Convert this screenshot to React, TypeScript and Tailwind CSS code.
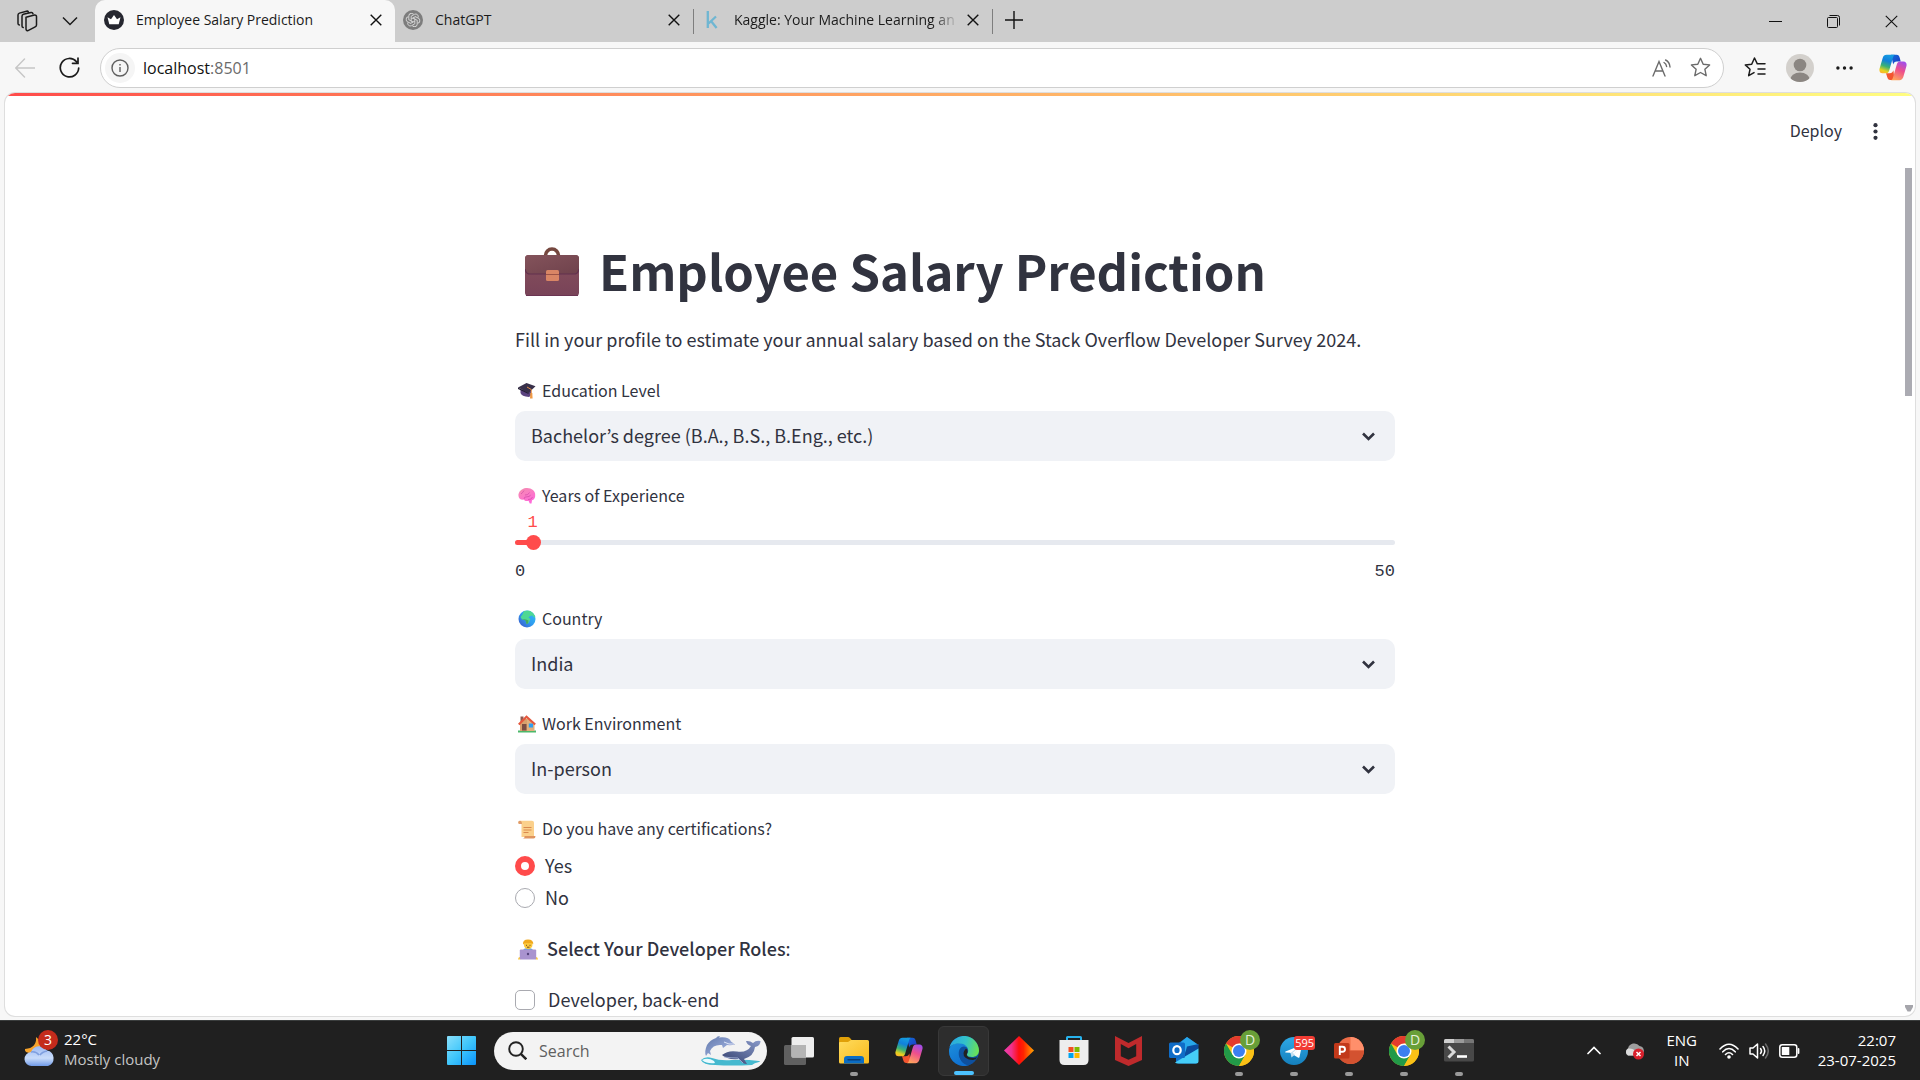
import { useId, useState } from "react";
import type { ReactNode } from "react";

const UI = "font-['Open_Sans','Noto_Sans',sans-serif]";
const SOURCE = "font-['Noto_Sans_CJK_KR',sans-serif]";

/* ---------- Browser icons ---------- */

function WorkspacesIcon() {
  return (
    <svg width="22" height="22" viewBox="0 0 22 22" fill="none" stroke="#1b1b1b" strokeWidth="1.5" strokeLinejoin="round" strokeLinecap="round">
      <path d="M10 7.2 18.5 5a1.6 1.6 0 0 1 2 1.600v8.300a2 2 0 0 1-1.300 1.900l-6.700 3.600A1.600 1.600 0 0 1 10 19Z" />
      <path d="M7.200 17.600A1.600 1.600 0 0 1 6 16V6.200a2 2 0 0 1 1.400-1.900L15 2.600a1.700 1.700 0 0 1 2 1.200" />
      <path d="M3.400 15A1.600 1.600 0 0 1 2 13.400V5a2 2 0 0 1 1.400-1.900L10.500 1.200a1.600 1.600 0 0 1 1.900.9" />
    </svg>
  );
}

function CloseGlyph({ size = 12, weight = 1.4 }: { size?: number; weight?: number }) {
  return (
    <svg width={size} height={size} viewBox="0 0 12 12" fill="none" stroke="#111" strokeWidth={weight}>
      <path d="M.7.7l10.600 10.600M11.300.7.7 11.300" />
    </svg>
  );
}

function CrownIcon() {
  return (
    <svg width="20" height="20" viewBox="0 0 20 20">
      <circle cx="10" cy="10" r="10" fill="#262730" />
      <path d="M3.500 7.300 7 9.200 10 5l3 4.200 3.500-1.900-1.800 6.900H5.300Z" fill="#fff" />
    </svg>
  );
}

function OpenAiIcon() {
  return (
    <svg width="20" height="20" viewBox="0 0 20 20" fill="none">
      <circle cx="10" cy="10" r="10" fill="#7d7d7d" />
      <g stroke="#d8d8d8" strokeWidth=".9" strokeLinejoin="round">
        {[0, 60, 120, 180, 240, 300].map((a) => (
          <path key={a} d="M8.200 10.900V6.200l3.300-1.900a2.600 2.600 0 0 1 3.600 3.300" transform={`rotate(${a} 10 10)`} />
        ))}
      </g>
    </svg>
  );
}

function KaggleIcon() {
  return (
    <svg width="12" height="20" viewBox="0 0 12 20" fill="none" stroke="#6fb6d2" strokeWidth="2.300">
      <path d="M1.800 1v17M10 6.500l-7.500 7M5 11l5.600 7" />
    </svg>
  );
}

function ReadAloudIcon() {
  return (
    <svg width="20" height="20" viewBox="0 0 20 20" fill="none" stroke="#6b6b6b" strokeWidth="1.400" strokeLinecap="round">
      <path d="M1 18 7 3.500 13 18M3.200 13h7.600" />
      <path d="M12 4.500q2.300 1.200 2.600 4M13.600 2q4 2 4.400 7" />
    </svg>
  );
}

function StarIcon() {
  return (
    <svg width="21" height="21" viewBox="0 0 21 21" fill="none" stroke="#6b6b6b" strokeWidth="1.400" strokeLinejoin="round">
      <path d="m10.500 1.300 2.700 5.900 6.400.7-4.700 4.400 1.300 6.400-5.700-3.200-5.700 3.200 1.300-6.400L1.400 7.900l6.400-.7Z" />
    </svg>
  );
}

function FavoritesIcon() {
  return (
    <svg width="22" height="21" viewBox="0 0 22 21" fill="none" stroke="#1b1b1b" strokeWidth="1.500" strokeLinejoin="round" strokeLinecap="round">
      <path d="M13.300 6.800 10.500 1 7.700 7.200 1.300 7.900 6 12.300l-1.300 6.400L10 15.600M13.300 6.800H21" />
      <path d="M14 12H21M14 17H21" />
    </svg>
  );
}

function ProfileIcon() {
  return (
    <svg width="28" height="28" viewBox="0 0 28 28">
      <defs>
        <clipPath id="avatar-clip">
          <circle cx="14" cy="14" r="14" />
        </clipPath>
      </defs>
      <g clipPath="url(#avatar-clip)">
        <rect width="28" height="28" fill="#d3d0cc" />
        <circle cx="14" cy="11" r="6.300" fill="#8b8682" />
        <ellipse cx="14" cy="26.500" rx="10" ry="8" fill="#8b8682" />
      </g>
    </svg>
  );
}

function CopilotIcon() {
  const id = useId();
  return (
    <svg width="28" height="27" viewBox="0 0 28 27">
      <defs>
        <linearGradient id={id + "a"} x1=".5" y1="0" x2=".2" y2="1">
          <stop offset="0" stopColor="#159be0" />
          <stop offset=".3" stopColor="#1180dc" />
          <stop offset=".6" stopColor="#3bb273" />
          <stop offset=".85" stopColor="#e8d21d" />
          <stop offset="1" stopColor="#ffb02e" />
        </linearGradient>
        <linearGradient id={id + "b"} x1=".7" y1="0" x2=".3" y2="1">
          <stop offset="0" stopColor="#a34de8" />
          <stop offset=".45" stopColor="#ee4f8c" />
          <stop offset="1" stopColor="#ffa45c" />
        </linearGradient>
        <linearGradient id={id + "c"} x1="0" y1="0" x2="1" y2="1">
          <stop offset="0" stopColor="#0f6fd8" />
          <stop offset="1" stopColor="#2136c4" />
        </linearGradient>
      </defs>
      <path d="M12 .8h5.500c2 0 2.700 1.200 3.200 3l1 3.600h-3.900c-2 0-3 1-3.600 3Z" fill={`url(#${id}c)`} />
      <path d="M15.500 26h-4.300c-1.700 0-2.500-1.200-3-3l-1.200-3.700h3.700c2 0 3-1 3.700-3Z" fill="#f3552f" />
      <path d="M7.500.8H16c-1 .3-1.600 1.200-2 2.600l-3.800 13c-.5 1.900-1.600 2.900-3.500 2.900H3.500C1 19.300-.1 17 .6 14.500L3.700 4C4.300 2 5.600.8 7.500.8Z" fill={`url(#${id}a)`} />
      <path d="M20.500 26.200H12c1-.3 1.600-1.200 2-2.600l3.800-13.200c.5-1.900 1.600-2.900 3.500-2.900h3.200c2.500 0 3.600 2.300 2.900 4.700L24.300 23c-.6 2-1.900 3.200-3.800 3.200Z" fill={`url(#${id}b)`} />
    </svg>
  );
}

/* ---------- Form pictograms ---------- */

function BriefcaseIcon() {
  return (
    <svg width="54" height="50" viewBox="0 0 54 50">
      <defs>
        <linearGradient id="case-body" x1="0" y1="0" x2="0" y2="1">
          <stop offset="0" stopColor="#87505c" />
          <stop offset="1" stopColor="#784358" />
        </linearGradient>
        <linearGradient id="case-flap" x1="0" y1="0" x2="1" y2="1">
          <stop offset="0" stopColor="#84535b" />
          <stop offset="1" stopColor="#6f424c" />
        </linearGradient>
      </defs>
      <path d="M20.500 10V8.500a6.500 6.500 0 0 1 13 0V10" fill="none" stroke="#75473f" strokeWidth="3.600" />
      <rect y="8" width="54" height="41" rx="3.500" fill="url(#case-body)" />
      <path d="M0 11.500A3.500 3.500 0 0 1 3.500 8h47a3.500 3.500 0 0 1 3.500 3.500V22q-1 5-5 5H5q-4 0-5-5Z" fill="url(#case-flap)" />
      <path d="M0 22q1 5 5 5h44q4 0 5-5" fill="none" stroke="#63304f" strokeWidth="1.200" />
      <path d="M1 48.500h52" stroke="#6b3452" strokeWidth="1" />
      <rect x="21" y="23" width="13" height="11" rx="1.500" fill="#d98565" />
      <path d="M21 27.500h13" stroke="#9c5346" strokeWidth="1" />
    </svg>
  );
}

function GraduationIcon() {
  return (
    <svg width="18" height="18" viewBox="0 0 18 18">
      <path d="M2.500 7.500v3.500q1 3.500 8.500 4l2-1.500V8Z" fill="#5b4380" />
      <path d="M0 5.500 8.500 1 17.500 4.300 10.500 11Z" fill="#38304a" />
      <path d="M0 5.500 10.500 11v1L0 7Z" fill="#231d33" />
      <path d="M9 5 13.300 7.500V12" fill="none" stroke="#e8934a" strokeWidth="1" />
      <path d="M12.300 11h2l.3 5.500h-2.600Z" fill="#f09a45" />
    </svg>
  );
}

function BrainIcon() {
  return (
    <svg width="18" height="18" viewBox="0 0 18 18">
      <defs>
        <linearGradient id="brain-fill" x1="0" y1="0" x2=".6" y2="1">
          <stop offset="0" stopColor="#f58fae" />
          <stop offset="1" stopColor="#ff69d8" />
        </linearGradient>
      </defs>
      <path d="M.5 9C0 5 3.500 1.500 8 1c5-.5 9.500 2.500 9.200 7 .2 3-1.200 4.800-3.200 5.300l-.5 3.200h-1.700l-1.300-2.700C8.500 14.500 6.500 14 6 12.500 3 13.200.8 11.800.5 9Z" fill="url(#brain-fill)" />
      <path d="M3 7q2-1.500 3-3.500M7 8q3 .5 4.500-2.500M6 12q0-2.500 3-2.200t3.500-2M10 12.500q3.500.5 4.500-2.500" fill="none" stroke="#d651a8" strokeWidth=".8" />
    </svg>
  );
}

function GlobeIcon() {
  return (
    <svg width="18" height="18" viewBox="0 0 18 18">
      <defs>
        <linearGradient id="globe-sea" x1="1" y1="0" x2="0" y2="1">
          <stop offset="0" stopColor="#2fc4f5" />
          <stop offset=".5" stopColor="#2f9cf0" />
          <stop offset="1" stopColor="#3b4cc4" />
        </linearGradient>
        <clipPath id="globe-clip">
          <circle cx="9" cy="9" r="8.500" />
        </clipPath>
      </defs>
      <g clipPath="url(#globe-clip)">
        <rect width="18" height="18" fill="url(#globe-sea)" />
        <path d="M6 1 11 0l5 2 2 4.500-2 1-1.500-2-2.500.5-1.500 1.500L12.500 9 10.500 13 8.500 14l-1-4-3.500-.5L2.500 7l2-2.500Z" fill="#4ed894" />
        <path d="M3.500 9 8 9.500l2.500 1-.5 3-1.500.5-1-3.500Z" fill="#45a95f" />
      </g>
    </svg>
  );
}

function HouseIcon() {
  return (
    <svg width="18" height="18" viewBox="0 0 18 18">
      <rect y="15.500" width="18" height="2" fill="#4cb86a" />
      <rect x="2.500" y="1.500" width="3" height="6" fill="#8f5a50" />
      <path d="M2 8 7 3l9 5v8H2Z" fill="#d8a06c" />
      <path d="M9 3 16.500 9v7H9Z" fill="#e2b07c" />
      <rect x="4" y="9" width="4.500" height="6.500" fill="#7b4d43" />
      <rect x="10.800" y="8.500" width="4.200" height="4" fill="#2f9ff0" />
      <path d="M.8 9.500 8.500 1.800l8.700 7.700" fill="none" stroke="#e4573d" strokeWidth="2.200" />
    </svg>
  );
}

function ScrollIcon() {
  return (
    <svg width="18" height="19" viewBox="0 0 18 19">
      <path d="M2 .8h12a2 2 0 0 1 2 2V17H3.500V4H2A1.600 1.600 0 0 1 2 .8Z" fill="#fbd08b" />
      <path d="M1.800.8a1.600 1.600 0 0 0 0 3.200H4Q3.800.8 1.800.8Z" fill="#e09a68" />
      <path d="M5.500 7.500h8M5.500 10h8M5.500 12.500h5" stroke="#d98a4f" strokeWidth="1" />
      <path d="M6.500 16h11q0 2.500-2 2.500H4.500Q7 18 6.500 16Z" fill="#df9560" />
    </svg>
  );
}

function TechnologistIcon() {
  return (
    <svg width="20" height="21" viewBox="0 0 20 21">
      <path d="M4.500 12q1-3 5.500-3t5.500 3v4h-11Z" fill="#58a6d8" />
      <circle cx="10.200" cy="5.800" r="4.300" fill="#fcc83c" />
      <path d="M5 5.500Q4.500.5 10 .5t5.300 4.800Q13 3.500 10.500 4.200 7.500 3.500 5 5.500Z" fill="#f0a91e" />
      <path d="M8.500 5.800v1M12 5.800v1M9 8.200h2.500" stroke="#5e3d20" strokeWidth=".9" />
      <path d="M0 20.500Q0 17.500 2.500 18v2.500ZM20 20.500q0-3-2.500-2.500v2.500Z" fill="#fcc83c" />
      <rect x="1.800" y="10.500" width="16.400" height="10" rx="1" fill="#a993cf" />
      <circle cx="10" cy="15" r="1.200" fill="#54437b" />
    </svg>
  );
}

/* ---------- Taskbar icons ---------- */

function WeatherIcon() {
  return (
    <svg width="36" height="38" viewBox="0 0 36 38">
      <defs>
        <linearGradient id="cloud-fill" x1="0" y1="0" x2="0" y2="1">
          <stop offset="0" stopColor="#9db9f2" />
          <stop offset=".6" stopColor="#c9dcfa" />
          <stop offset="1" stopColor="#6f9ae8" />
        </linearGradient>
      </defs>
      <path d="M12 7Q19 12 15 19T2 22Q.5 20.500 1 19 13 18 12 7Z" fill="#f7a32b" />
      <path d="M8 36a7 7 0 0 1-1-14A9 9 0 0 1 23 20.500 8 8 0 0 1 24 36Z" fill="url(#cloud-fill)" />
      <path d="M7 22q5-1 8 3M23 21q-5 1-7 4" fill="none" stroke="#7f9fdf" strokeWidth="1.500" />
    </svg>
  );
}

function StartIcon() {
  return (
    <svg width="29" height="29" viewBox="0 0 29 29">
      <defs>
        <linearGradient id="start-fill" gradientUnits="userSpaceOnUse" x1="0" y1="0" x2="29" y2="29">
          <stop offset="0" stopColor="#8ae0fb" />
          <stop offset=".5" stopColor="#3fc6fb" />
          <stop offset="1" stopColor="#0a93fb" />
        </linearGradient>
      </defs>
      <path d="M1 0h13v14H0V1Q0 0 1 0ZM15 0h13q1 0 1 1v13H15ZM0 15h14v14H1q-1 0-1-1ZM15 15h14v13q0 1-1 1H15Z" fill="url(#start-fill)" />
    </svg>
  );
}

function DolphinArt() {
  return (
    <svg width="60" height="30" viewBox="0 0 60 30">
      <defs>
        <linearGradient id="dolphin-a" x1="0" y1="0" x2="1" y2="1">
          <stop offset="0" stopColor="#5f76a8" />
          <stop offset=".6" stopColor="#8fa2d2" />
          <stop offset="1" stopColor="#46568f" />
        </linearGradient>
        <linearGradient id="dolphin-b" x1="1" y1="0" x2="0" y2="1">
          <stop offset="0" stopColor="#8798c8" />
          <stop offset="1" stopColor="#34406d" />
        </linearGradient>
      </defs>
      <path d="M0 24q4-4 11-2 8 3 20 2t27 1q2 .5 0 1-5 1-7 3-20 1-37 0Q2 29 0 24Z" fill="#45b9cf" />
      <path d="M1 24q6-3 12 1l1 2q-8 1-13-3Z" fill="#e9fbff" />
      <path d="M5 20Q3 16 6 9q3-5 9-7 1-2 4-2l-1 1.500q10-1 12 4l4 3q-4 1-8 .5l-4 3-1-3Q12 8 9 15l1 4-3-2Z" fill="url(#dolphin-a)" />
      <path d="M33 8q-5 1-10-2" stroke="#dfe6f8" strokeWidth="1" fill="none" />
      <path d="M21 19q6-5 15-3.500 10 1.500 14-5.500-4-1-5-5 4-.5 7 2 3-3 7.500-2 0 5-5.500 6-1 9-11 12l3 5q-5 0-8-5-12 1-17-4Z" fill="url(#dolphin-b)" />
      <path d="M23 21q7 1 14 1l5 5" stroke="#a9b8dd" strokeWidth=".8" fill="none" />
    </svg>
  );
}

function TaskViewIcon() {
  return (
    <svg width="30" height="28" viewBox="0 0 30 28">
      <rect y="8" width="22" height="20" rx="1.500" fill="#606060" />
      <rect x="7.500" width="22.500" height="20.500" rx="1.500" fill="#eee" />
      <path d="M7.500 8H22v12.500H9q-1.500 0-1.500-1.500Z" fill="#b4b4b4" />
    </svg>
  );
}

function ExplorerIcon() {
  return (
    <svg width="30" height="27" viewBox="0 0 30 27">
      <defs>
        <linearGradient id="folder-fill" x1="0" y1="0" x2="1" y2="1">
          <stop offset="0" stopColor="#ffdc5e" />
          <stop offset="1" stopColor="#f9b91a" />
        </linearGradient>
      </defs>
      <path d="M0 8V1.500Q0 0 1.500 0H9q1 0 2 1l2 2.500V8Z" fill="#e0a008" />
      <path d="M0 6q0-1 1-1h8l3-2h16.500Q30 3 30 4.500V25q0 1.500-1.500 1.500h-27Q0 26.500 0 25Z" fill="url(#folder-fill)" />
      <path d="M5 26.500V22q0-3 3-3h14q3 0 3 3v4.500Z" fill="#0b6dc4" />
      <path d="M9 22.800h12" stroke="#0a3f78" strokeWidth="1.400" strokeLinecap="round" />
    </svg>
  );
}

function EdgeIcon() {
  return (
    <svg width="30" height="30" viewBox="0 0 30 30">
      <defs>
        <linearGradient id="edge-top" x1="0" y1=".4" x2="1" y2=".6">
          <stop offset="0" stopColor="#2aa7e0" />
          <stop offset=".5" stopColor="#33c3c9" />
          <stop offset="1" stopColor="#6be252" />
        </linearGradient>
        <linearGradient id="edge-left" x1="0" y1="0" x2=".6" y2="1">
          <stop offset="0" stopColor="#1c8fdc" />
          <stop offset="1" stopColor="#0f6fd0" />
        </linearGradient>
      </defs>
      <circle cx="15" cy="15" r="15" fill="#0e509e" />
      <path d="M0 15C0 10 5 7 11 7q7 0 8 6-1-2.500-4-2.500C11 10.500 9 15 10 20c1 4 5 8 11 8.800A15 15 0 0 1 0 15Z" fill="url(#edge-left)" />
      <path d="M.3 12A15 15 0 0 1 30 14.500C30 19 26.500 21 23 21q-5 0-5-2.500c0-1 1.200-1.600 1.200-4C19 11 16 7.500 10.500 7.500 5.500 7.500 1.500 9.500.3 12Z" fill="url(#edge-top)" />
      <path d="M17 12.500q2.500 2 1 5.500-1 2 2 3.200 4 1.400 8 .1-.8 1.500-1.500 2.400-6 1-10-2-4.500-4 .5-9.200Z" fill="#212121" />
      <path d="M13 15q-1 5 3.500 8 4.500 2.600 10.500 0-3 5-8 6.500Q11 27 10.500 20q0-4 2.500-5Z" fill="#0e509e" />
    </svg>
  );
}

function DiamondIcon() {
  return (
    <svg width="30" height="29" viewBox="0 0 30 29">
      <defs>
        <linearGradient id="diamond-fill">
          <stop offset="0" stopColor="#ef3fb0" />
          <stop offset=".25" stopColor="#f0308a" />
          <stop offset=".5" stopColor="#ff0d0d" />
          <stop offset=".65" stopColor="#ff2400" />
          <stop offset="1" stopColor="#ffa500" />
        </linearGradient>
      </defs>
      <path d="M15 0 30 14.500 15 29 0 14.500Z" fill="url(#diamond-fill)" />
    </svg>
  );
}

function StoreIcon() {
  return (
    <svg width="30" height="29" viewBox="0 0 30 29">
      <path d="M8 5V1.500Q8 1 8.500 1h13q.5 0 .5.500V5" fill="none" stroke="#27b2ec" strokeWidth="2" />
      <path d="M.5 4h29v20q0 5-5 5h-19q-5 0-5-5Z" fill="#ededed" />
      <path d="M9.500 11h5v5h-5Z" fill="#f25022" />
      <path d="M15.500 11h5v5h-5Z" fill="#7fba00" />
      <path d="M9.500 17h5v5h-5Z" fill="#00a4ef" />
      <path d="M15.500 17h5v5h-5Z" fill="#ffb900" />
    </svg>
  );
}

function McAfeeIcon() {
  return (
    <svg width="27" height="30" viewBox="0 0 27 30">
      <path d="M0 0 13.500 7 27 0v24l-13.500 6L0 24Zm5.800 8v12.200l7.700 3.600 7.700-3.600V8l-7.700 4.300Z" fill="#bf2a2c" />
    </svg>
  );
}

function OutlookIcon() {
  return (
    <svg width="30" height="27" viewBox="0 0 30 27">
      <path d="M7 8 18 0l11 8v16q0 2.500-2.500 2.500H10Q7 26.500 7 24Z" fill="#1173cf" />
      <path d="M12 5 18 0l11.500 8-12 9Z" fill="#28a8ea" />
      <path d="M18 9.500 29.500 7v5L15 20Z" fill="#0b4c9e" />
      <path d="M6 25.500 29.500 11.500V24q0 2.500-2.500 2.500H9Q7 26.500 6 25.500Z" fill="#45cdf7" />
      <rect y="5.500" width="16" height="15.500" rx="1.500" fill="#0f6cc7" />
      <ellipse cx="8" cy="13.200" rx="3.700" ry="4" fill="none" stroke="#fff" strokeWidth="2.200" />
    </svg>
  );
}

function ChromeIcon() {
  return (
    <svg width="30" height="30" viewBox="0 0 30 30">
      <circle cx="15" cy="15" r="15" fill="#fbc116" />
      <path d="M15 15 2 7.500A15 15 0 0 1 28 7.500H15Z" fill="#e33b2e" />
      <path d="M2 7.500 8.500 18.800 15 15l6.500 3.800L15 30A15 15 0 0 1 2 7.500Z" fill="#229a48" />
      <path d="M21.500 18.800 15 30A15 15 0 0 0 28 7.500H15L21.500 11.200Z" fill="#fbc116" />
      <circle cx="15" cy="15" r="7.500" fill="#fff" />
      <circle cx="15" cy="15" r="6" fill="#3b7ff0" />
    </svg>
  );
}

function TelegramIcon() {
  return (
    <svg width="28" height="28" viewBox="0 0 28 28">
      <defs>
        <linearGradient id="tg-fill" x1="0" y1="0" x2="0" y2="1">
          <stop offset="0" stopColor="#2ea8e6" />
          <stop offset="1" stopColor="#1580bd" />
        </linearGradient>
      </defs>
      <circle cx="14" cy="14" r="14" fill="url(#tg-fill)" />
      <path d="M5.500 14.500 21 8.300q1-.3.800 1L19.500 20q-.4 1.300-1.600.6L10 15.800l-4.500-.3q-.8-.5 0-1Z" fill="#fff" />
      <path d="m10.500 16 1 4.500 2.500-2.300 5-8.700Z" fill="#c3dff0" />
      <path d="m12.500 16 6.500-6-4.500 7Z" fill="#fff" />
    </svg>
  );
}

function PowerPointIcon() {
  return (
    <svg width="30" height="27" viewBox="0 0 30 27">
      <circle cx="16.500" cy="13.500" r="13.500" fill="#ed6c47" />
      <path d="M16.500 0A13.500 13.500 0 0 1 30 13.500H16.500Z" fill="#ff8f6b" />
      <path d="M3 13.500h27a13.500 13.500 0 0 1-27 0Z" fill="#d35230" />
      <rect y="6" width="15.500" height="15.500" rx="1.500" fill="#c2391a" />
      <path d="M5.800 18V9.800h2.700a2.500 2.500 0 0 1 0 5H6" fill="none" stroke="#fff" strokeWidth="1.900" />
    </svg>
  );
}

function TerminalIcon() {
  return (
    <svg width="30" height="23" viewBox="0 0 30 23">
      <rect width="30" height="22.500" rx="1.500" fill="#484848" />
      <path d="M0 1.500Q0 0 1.500 0H10v4H0Z" fill="#cfcfcf" />
      <path d="M10 0h10v4H10Z" fill="#9a9a9a" />
      <path d="M20 0h8.500Q30 0 30 1.500V4H20Z" fill="#767676" />
      <path d="m4.500 7.500 5.500 5.500-5.500 5.500" fill="none" stroke="#d9d9d9" strokeWidth="3" />
      <path d="M13 17.500h10" stroke="#fff" strokeWidth="2.600" />
    </svg>
  );
}

function OneDriveIcon() {
  return (
    <svg width="20" height="18" viewBox="0 0 20 18">
      <path d="M4 13.500a4 4 0 0 1 0-7A6.500 6.500 0 0 1 15.500 4 5 5 0 0 1 17 13.500Z" fill="#9d9d9d" />
      <path d="M4 13.500a4 4 0 0 1 0-7q5-.5 8 3l-2 4Z" fill="#dcdcdc" />
      <circle cx="14.500" cy="12" r="5.500" fill="#d9202c" />
      <path d="m12.500 10 4 4m0-4-4 4" stroke="#fff" strokeWidth="1.500" />
    </svg>
  );
}

function TrayIcons() {
  return (
    <>
      <svg width="20" height="16" viewBox="0 0 20 16" fill="none" stroke="#fff" strokeWidth="1.600" strokeLinecap="round">
        <path d="M1 6q9-9.500 18 0M3.800 8.800q6.200-6.500 12.400 0M6.500 11.500q3.500-3.500 7 0" />
        <circle cx="10" cy="14" r="1" fill="#fff" />
      </svg>
      <svg width="20" height="18" viewBox="0 0 20 18" fill="none" stroke="#fff" strokeWidth="1.500" strokeLinecap="round" strokeLinejoin="round">
        <path d="M1 6v6h3l4.500 4V2L4 6Z" />
        <path d="M11.500 6.500q2 2.500 0 5M14 4.500q3.500 4.500 0 9" />
        <path d="M16.500 2q5.500 7 0 14" stroke="#6c6c6c" />
      </svg>
      <svg width="21" height="14" viewBox="0 0 21 14" fill="none">
        <rect x=".8" y=".8" width="17" height="12.400" rx="2.500" stroke="#fff" strokeWidth="1.500" />
        <rect x="2.800" y="3" width="7.500" height="8" rx=".5" fill="#fff" />
        <path d="M19.500 5v4" stroke="#fff" strokeWidth="1.800" strokeLinecap="round" />
      </svg>
    </>
  );
}

/* ---------- Browser chrome ---------- */

function Tab({ icon, title, active = false, fade = false }: { icon: ReactNode; title: string; active?: boolean; fade?: boolean }) {
  return (
    <div
      className={
        active
          ? "flex h-full w-[300px] items-center rounded-t-[10px] bg-[#f7f7f7] pr-[11px] pb-0.5 pl-[9px]"
          : "flex h-full w-[298px] items-center pr-[11px] pb-0.5 pl-2"
      }
    >
      <span className="flex w-5 shrink-0 justify-center">{icon}</span>
      <button
        className={
          fade
            ? "ml-3 min-w-0 flex-1 overflow-hidden text-left text-sm whitespace-nowrap text-[#1b1b1b] [mask-image:linear-gradient(to_right,black_88%,transparent)]"
            : "ml-3 min-w-0 flex-1 overflow-hidden text-left text-sm whitespace-nowrap text-[#1b1b1b]"
        }
      >
        {title}
      </button>
      <button aria-label={"Close " + title} className="ml-1.5 flex size-4 shrink-0 items-center justify-center">
        <CloseGlyph />
      </button>
    </div>
  );
}

function TabStrip() {
  return (
    <div className="flex h-[42px] shrink-0 items-center bg-[#cdcdcd]">
      <div className="flex h-full w-[95px] items-center gap-6 pl-4">
        <button aria-label="Workspaces">
          <WorkspacesIcon />
        </button>
        <button aria-label="Tab actions">
          <svg width="16" height="10" viewBox="0 0 16 10" fill="none" stroke="#1b1b1b" strokeWidth="1.500">
            <path d="m1 1.500 7 7 7-7" />
          </svg>
        </button>
      </div>
      <Tab active icon={<CrownIcon />} title="Employee Salary Prediction" />
      <Tab icon={<OpenAiIcon />} title="ChatGPT" />
      <span className="h-[25px] w-px bg-[#7e7e7e]" />
      <Tab fade icon={<KaggleIcon />} title="Kaggle: Your Machine Learning an" />
      <span className="h-[25px] w-px bg-[#7e7e7e]" />
      <button aria-label="New tab" className="ml-3 pb-0.5">
        <svg width="18" height="18" viewBox="0 0 18 18" stroke="#111" strokeWidth="1.400">
          <path d="M9 0v18M0 9h18" />
        </svg>
      </button>
      <div className="ml-auto flex items-center gap-[45px] pr-[22px]">
        <button aria-label="Minimize">
          <svg width="13" height="13" viewBox="0 0 13 13" stroke="#111">
            <path d="M0 6.500h13" />
          </svg>
        </button>
        <button aria-label="Restore">
          <svg width="13" height="13" viewBox="0 0 13 13" fill="none" stroke="#111">
            <rect x=".5" y="2.500" width="10" height="10" rx="1" />
            <path d="M2.500.5h8q2 0 2 2v8" />
          </svg>
        </button>
        <button aria-label="Close window">
          <CloseGlyph size={13} weight={1} />
        </button>
      </div>
    </div>
  );
}

function Toolbar() {
  return (
    <div className="flex h-[51px] shrink-0 items-center pr-[13px] pl-[15px]">
      <button aria-label="Back">
        <svg width="20" height="20" viewBox="0 0 20 20" fill="none" stroke="#c6c6c6" strokeWidth="1.400" strokeLinecap="round">
          <path d="M20 10H1M9.500 1 .8 10l8.700 9" />
        </svg>
      </button>
      <button aria-label="Refresh" className="ml-6">
        <svg width="21" height="21" viewBox="0 0 21 21" fill="none" stroke="#1b1b1b" strokeWidth="1.700" strokeLinecap="round">
          <path d="M17.500 4.700A9.200 9.200 0 1 0 19.700 11M19 1v5.300h-5.500" />
        </svg>
      </button>
      <div className="ml-5 flex h-10 flex-1 items-center rounded-full border border-[#cfcfcf] bg-white pr-3 pl-1">
        <button aria-label="Site information" className="flex size-[30px] items-center justify-center rounded-full bg-[#f5f5f5]">
          <svg width="18" height="18" viewBox="0 0 18 18" fill="none" stroke="#5f5f5f" strokeWidth="1.400">
            <circle cx="9" cy="9" r="8" />
            <path d="M9 8v5M9 5v1.500" />
          </svg>
        </button>
        <div className="ml-2 flex-1 text-base text-[#6b6b6b]">
          <span className="text-[#111]">localhost</span>:8501
        </div>
        <button aria-label="Read aloud">
          <ReadAloudIcon />
        </button>
        <button aria-label="Add to favorites" className="ml-[18px]">
          <StarIcon />
        </button>
      </div>
      <button aria-label="Favorites" className="ml-5">
        <FavoritesIcon />
      </button>
      <button aria-label="Profile" className="ml-5">
        <ProfileIcon />
      </button>
      <button aria-label="Settings and more" className="ml-[22px]">
        <svg width="17" height="4" viewBox="0 0 17 4" fill="#1b1b1b">
          <circle cx="1.900" cy="2" r="1.700" />
          <circle cx="8.500" cy="2" r="1.700" />
          <circle cx="15.100" cy="2" r="1.700" />
        </svg>
      </button>
      <button aria-label="Copilot" className="ml-[26px]">
        <CopilotIcon />
      </button>
    </div>
  );
}

/* ---------- Form ---------- */

function FieldLabel({ id, icon, children }: { id: string; icon: ReactNode; children: ReactNode }) {
  return (
    <label htmlFor={id} className="flex h-[30px] items-center text-base leading-none">
      <span className="flex w-[27px] shrink-0 pl-[3px]">{icon}</span>
      <span className="pb-0.5">{children}</span>
    </label>
  );
}

function SelectField({ id, icon, label, options }: { id: string; icon: ReactNode; label: string; options: string[] }) {
  return (
    <div>
      <FieldLabel id={id} icon={icon}>
        {label}
      </FieldLabel>
      <div className="mt-[5px] grid items-center">
        <select id={id} className="col-start-1 row-start-1 h-[50px] w-full appearance-none rounded-[10px] bg-[#f0f2f6] px-4 pb-0.5 text-lg">
          {options.map((o) => (
            <option key={o}>{o}</option>
          ))}
        </select>
        <svg className="pointer-events-none col-start-1 row-start-1 mr-5 justify-self-end" width="13" height="9" viewBox="0 0 13 9" fill="none" stroke="#31333f" strokeWidth="2.600">
          <path d="m1 1.500 5.500 5.500L12 1.500" />
        </svg>
      </div>
    </div>
  );
}

function ExperienceSlider() {
  const [years, setYears] = useState(1);
  const share = (years / 50) * 100;
  return (
    <div>
      <FieldLabel id="years" icon={<BrainIcon />}>
        Years of Experience
      </FieldLabel>
      <div className="h-[22px] font-['Liberation_Mono',monospace] text-[17px] leading-6 text-[#ff4b4b]">
        <output htmlFor="years" className="flex w-0 justify-center" style={{ marginLeft: `${share}%` }}>
          {years}
        </output>
      </div>
      <div className="grid h-[19px] items-center">
        <div className="col-start-1 row-start-1 h-[5px] overflow-hidden rounded-full bg-[#e6e9ef]">
          <div className="h-full bg-[#ff4b4b]" style={{ width: `${share}%` }} />
        </div>
        <input
          id="years"
          type="range"
          min={0}
          max={50}
          value={years}
          onChange={(e) => setYears(Number(e.target.value))}
          className="col-start-1 row-start-1 -mx-[7px] h-[15px] w-[calc(100%+14px)] appearance-none bg-transparent [&::-webkit-slider-thumb]:size-[15px] [&::-webkit-slider-thumb]:appearance-none [&::-webkit-slider-thumb]:rounded-full [&::-webkit-slider-thumb]:bg-[#ff4b4b]"
        />
      </div>
      <div className="mt-2 flex h-6 items-center justify-between font-['Liberation_Mono',monospace] text-[17px]">
        <span>0</span>
        <span>50</span>
      </div>
    </div>
  );
}

function CertificationChoice() {
  const [value, setValue] = useState("Yes");
  return (
    <fieldset>
      <legend className="flex h-[30px] items-center text-base leading-none">
        <span className="flex w-[27px] shrink-0 pl-[3px]">
          <ScrollIcon />
        </span>
        <span className="pb-0.5">Do you have any certifications?</span>
      </legend>
      <div className="mt-1.5">
        {["Yes", "No"].map((o) => (
          <label key={o} className="flex h-8 items-center gap-2.5 text-lg leading-none">
            <input
              type="radio"
              name="certifications"
              checked={value === o}
              onChange={() => setValue(o)}
              className="size-5 appearance-none rounded-full border border-[#a9aab0] bg-white checked:border-[6px] checked:border-[#ff4b4b]"
            />
            <span className="pb-0.5">{o}</span>
          </label>
        ))}
      </div>
    </fieldset>
  );
}

function AppPage() {
  return (
    <div className={`mx-[5px] mb-1 flex min-h-0 flex-1 flex-col overflow-hidden rounded-[10px] bg-white text-[#31333f] shadow-[0_0_0_1px_#dedede] ${SOURCE}`}>
      <div className="h-[3px] shrink-0 bg-linear-to-r from-[#ff4b4b] to-[#fffd80]" />
      <div className="flex min-h-0 flex-1">
        <div className="flex min-w-0 flex-1 flex-col overflow-hidden">
          <header className="flex h-[70px] shrink-0 items-center justify-end gap-[31px] pr-[27px]">
            <button className="pb-0.5 text-base leading-none">Deploy</button>
            <button aria-label="Main menu">
              <svg width="5" height="17" viewBox="0 0 5 17" fill="#31333f">
                <circle cx="2.500" cy="2.200" r="2.100" />
                <circle cx="2.500" cy="8.500" r="2.100" />
                <circle cx="2.500" cy="14.800" r="2.100" />
              </svg>
            </button>
          </header>
          <main className="mx-auto w-full max-w-[880px] pt-[66px]">
            <h1 className="flex h-20 items-center gap-5 pl-2.5 text-[49px] leading-none font-bold whitespace-nowrap">
              <BriefcaseIcon />
              <span className="pb-1.5">Employee Salary Prediction</span>
            </h1>
            <p className="mt-2.5 text-lg leading-[34px]">
              Fill in your profile to estimate your annual salary based on the Stack Overflow Developer Survey 2024.
            </p>
            <form className="mt-5 flex flex-col gap-5">
              <SelectField id="education" icon={<GraduationIcon />} label="Education Level" options={["Bachelor’s degree (B.A., B.S., B.Eng., etc.)"]} />
              <ExperienceSlider />
              <SelectField id="country" icon={<GlobeIcon />} label="Country" options={["India"]} />
              <SelectField id="work" icon={<HouseIcon />} label="Work Environment" options={["In-person"]} />
              <CertificationChoice />
              <fieldset>
                <legend className="flex h-[30px] items-center text-lg leading-none">
                  <span className="flex w-8 shrink-0 pl-[3px]">
                    <TechnologistIcon />
                  </span>
                  <span className="pb-0.5">
                    <span className="font-medium">Select Your Developer Roles</span>:
                  </span>
                </legend>
                <label className="mt-5 flex h-8 items-center gap-[13px] text-lg leading-none">
                  <input type="checkbox" className="size-5 appearance-none rounded-[5px] border border-[#a9aab0] bg-white checked:bg-[#ff4b4b]" />
                  <span className="pb-0.5">Developer, back-end</span>
                </label>
              </fieldset>
            </form>
          </main>
        </div>
        <div className="flex w-2.5 shrink-0 flex-col items-start justify-between pt-[72px] pb-1">
          <div className="h-[228px] w-[7px] bg-[#ababb2]" />
          <svg width="8" height="7" viewBox="0 0 8 7" fill="#a5a5ab">
            <path d="M0 0h8v2L5.500 6.500h-3L0 2Z" />
          </svg>
        </div>
      </div>
    </div>
  );
}

/* ---------- Taskbar ---------- */

function TaskItem({ label, running = false, active = false, badge, children }: { label: string; running?: boolean; active?: boolean; badge?: ReactNode; children: ReactNode }) {
  return (
    <button
      aria-label={label}
      className={
        active
          ? "relative mx-[2px] flex h-[50px] w-[51px] items-center justify-center rounded-[6px] border border-[#383838] bg-[#2d2d2d]"
          : "relative flex h-[50px] w-[55px] items-center justify-center"
      }
    >
      {children}
      {badge}
      {active && <span className="absolute bottom-0 h-1 w-5 rounded-full bg-[#4cc2ff]" />}
      {running && <span className="absolute bottom-0 h-1 w-2 rounded-full bg-[#9a9a9a]" />}
    </button>
  );
}

const initialBadge = (
  <span className="absolute top-1 right-1.5 flex size-5 items-center justify-center rounded-full bg-[#689f38] text-sm leading-none text-[#e6f0dc]">D</span>
);

function Taskbar() {
  return (
    <footer className="grid h-[60px] shrink-0 grid-cols-[1fr_auto_1fr] items-center border-t border-[#3a3d3d] bg-[#202020] text-white">
      <button className="flex items-center justify-self-start pb-1 pl-6 text-left">
        <span className="relative">
          <WeatherIcon />
          <span className="absolute top-0 right-0.5 flex size-5 items-center justify-center rounded-full bg-[#c42b1c] text-sm leading-none">3</span>
        </span>
        <span className="ml-1 text-[15px] leading-5">
          <span className="block">22°C</span>
          <span className="block text-[#c4c4c4]">Mostly cloudy</span>
        </span>
      </button>

      <nav className="flex items-center">
        <TaskItem label="Start">
          <StartIcon />
        </TaskItem>
        <label className="mr-1 ml-[5px] flex h-[38px] w-[273px] items-center rounded-full bg-[#f3f3f3] pr-1.5 pl-3.5">
          <svg width="19" height="19" viewBox="0 0 19 19" fill="none" stroke="#222" strokeWidth="1.900">
            <circle cx="8" cy="8" r="6.800" />
            <path d="m12.800 12.800 5.500 5.500" strokeWidth="2.400" />
          </svg>
          <input type="text" aria-label="Search" placeholder="Search" className="ml-3 min-w-0 flex-1 bg-transparent text-base text-[#333] placeholder:text-[#5f5f5f]" />
          <DolphinArt />
        </label>
        <TaskItem label="Task view">
          <TaskViewIcon />
        </TaskItem>
        <TaskItem label="File Explorer" running>
          <ExplorerIcon />
        </TaskItem>
        <TaskItem label="Copilot">
          <CopilotIcon />
        </TaskItem>
        <TaskItem label="Microsoft Edge" active>
          <EdgeIcon />
        </TaskItem>
        <TaskItem label="Diamond">
          <DiamondIcon />
        </TaskItem>
        <TaskItem label="Microsoft Store">
          <StoreIcon />
        </TaskItem>
        <TaskItem label="McAfee">
          <McAfeeIcon />
        </TaskItem>
        <TaskItem label="Outlook">
          <OutlookIcon />
        </TaskItem>
        <TaskItem label="Chrome" running badge={initialBadge}>
          <ChromeIcon />
        </TaskItem>
        <TaskItem
          label="Telegram"
          running
          badge={<span className="absolute top-2.5 right-1.5 flex h-[14px] items-center rounded-[3px] bg-[#f23c34] px-px text-[11px] leading-none">595</span>}
        >
          <TelegramIcon />
        </TaskItem>
        <TaskItem label="PowerPoint" running>
          <PowerPointIcon />
        </TaskItem>
        <TaskItem label="Chrome profile" running badge={initialBadge}>
          <ChromeIcon />
        </TaskItem>
        <TaskItem label="Terminal" running>
          <TerminalIcon />
        </TaskItem>
      </nav>

      <div className="flex items-center justify-self-end pr-6">
        <button aria-label="Show hidden icons">
          <svg width="14" height="9" viewBox="0 0 14 9" fill="none" stroke="#fff" strokeWidth="1.700" strokeLinecap="round">
            <path d="m1 7.500 6-6 6 6" />
          </svg>
        </button>
        <button aria-label="OneDrive" className="ml-[23px]">
          <OneDriveIcon />
        </button>
        <button className="ml-[22px] w-8 pb-0.5 text-center text-[15px] leading-5">
          ENG
          <br />
          IN
        </button>
        <button aria-label="Network, volume and battery" className="ml-[21px] flex items-center gap-2.5">
          <TrayIcons />
        </button>
        <button className="ml-[18px] pb-0.5 text-right text-[15px] leading-5">
          22:07
          <br />
          23-07-2025
        </button>
      </div>
    </footer>
  );
}

export default function App() {
  return (
    <div className={`flex h-screen flex-col overflow-hidden bg-[#f7f7f7] ${UI}`}>
      <TabStrip />
      <Toolbar />
      <AppPage />
      <Taskbar />
    </div>
  );
}
